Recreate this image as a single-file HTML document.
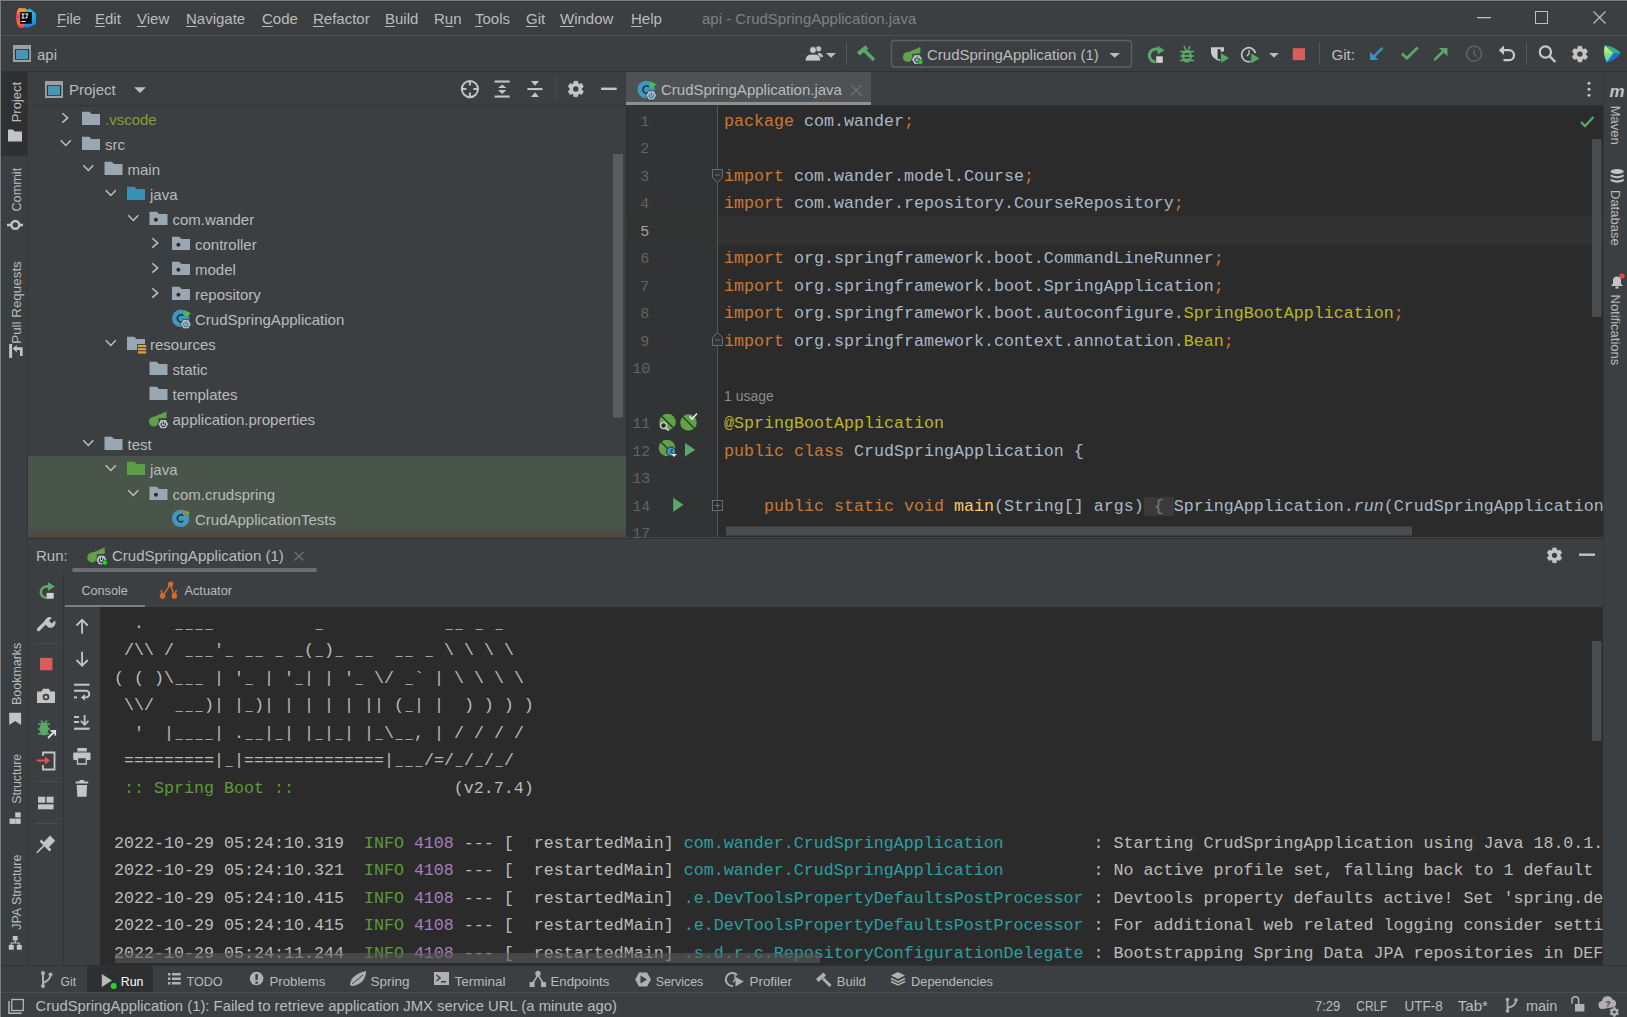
<!DOCTYPE html><html><head><meta charset="utf-8"><style>
html,body{margin:0;padding:0;width:1627px;height:1017px;overflow:hidden;background:#3c3f41}
.t{position:absolute;white-space:pre;font-family:"Liberation Sans",sans-serif;line-height:20px}
.m{position:absolute;white-space:pre;font-family:"Liberation Mono",monospace;line-height:27.5px;color:#a9b7c6}
.r{position:absolute}
svg{position:absolute;overflow:visible}
.us{display:inline-block;width:10px;transform:scaleX(0.72)}
.u{text-decoration:underline;text-underline-offset:2px;text-decoration-thickness:1px}
</style></head><body>

<div class="r" style="left:0px;top:0px;width:1627px;height:1px;background:#7a7e81;"></div>
<div class="r" style="left:1px;top:1px;width:1626px;height:1px;background:#36393b;"></div>
<div class="r" style="left:0px;top:0px;width:1px;height:1017px;background:#7a7e81;"></div>
<div class="r" style="left:1px;top:35px;width:1626px;height:1px;background:#4e5153;"></div>
<div class="r" style="left:1px;top:71px;width:1626px;height:1px;background:#2f3133;"></div>
<div class="t" style="left:57px;top:9.00px;font-size:15px;color:#bbbbbb;"><span class="u">F</span>ile</div>
<div class="t" style="left:95px;top:9.00px;font-size:15px;color:#bbbbbb;"><span class="u">E</span>dit</div>
<div class="t" style="left:137px;top:9.00px;font-size:15px;color:#bbbbbb;"><span class="u">V</span>iew</div>
<div class="t" style="left:186px;top:9.00px;font-size:15px;color:#bbbbbb;"><span class="u">N</span>avigate</div>
<div class="t" style="left:262px;top:9.00px;font-size:15px;color:#bbbbbb;"><span class="u">C</span>ode</div>
<div class="t" style="left:313px;top:9.00px;font-size:15px;color:#bbbbbb;"><span class="u">R</span>efactor</div>
<div class="t" style="left:385px;top:9.00px;font-size:15px;color:#bbbbbb;"><span class="u">B</span>uild</div>
<div class="t" style="left:434px;top:9.00px;font-size:15px;color:#bbbbbb;">R<span class="u">u</span>n</div>
<div class="t" style="left:475px;top:9.00px;font-size:15px;color:#bbbbbb;"><span class="u">T</span>ools</div>
<div class="t" style="left:526px;top:9.00px;font-size:15px;color:#bbbbbb;"><span class="u">G</span>it</div>
<div class="t" style="left:560px;top:9.00px;font-size:15px;color:#bbbbbb;"><span class="u">W</span>indow</div>
<div class="t" style="left:631px;top:9.00px;font-size:15px;color:#bbbbbb;"><span class="u">H</span>elp</div>
<div class="t" style="left:702px;top:9.00px;font-size:15px;color:#7f8183;">api - CrudSpringApplication.java</div>
<svg style="left:1477px;top:17px" width="16" height="2"><rect x="0" y="0" width="14" height="1.3" fill="#bdbdbd"/></svg>
<svg style="left:1535px;top:11px" width="14" height="14"><rect x="0.5" y="0.5" width="12" height="12" fill="none" stroke="#bdbdbd" stroke-width="1"/></svg>
<svg style="left:1593px;top:11px" width="14" height="14"><path d="M0.5 0.5L12.5 12.5M12.5 0.5L0.5 12.5" stroke="#bdbdbd" stroke-width="1.1"/></svg>
<div class="t" style="left:37px;top:44.60px;font-size:15px;color:#bbbbbb;">api</div>
<div class="r" style="left:1px;top:72px;width:27px;height:84px;background:#2e3032;"></div>
<div class="r" style="left:27px;top:72px;width:1px;height:893px;background:#323435;"></div>
<div class="r" style="left:1603px;top:72px;width:1px;height:893px;background:#323435;"></div>
<div class="r" style="left:28px;top:105px;width:598px;height:1px;background:#323435;"></div>
<div class="t" style="left:69px;top:79.80px;font-size:15px;color:#bbbbbb;">Project</div>
<div class="r" style="left:28px;top:456px;width:598px;height:75px;background:#49544a;"></div>
<div class="r" style="left:28px;top:527px;width:598px;height:10px;background:linear-gradient(#49544a,#4e4c42 40%,#51493f);"></div>
<div class="t" style="left:105.0px;top:109.50px;font-size:15px;color:#8c9a38;">.vscode</div>
<div class="t" style="left:105.0px;top:134.50px;font-size:15px;color:#bbbbbb;">src</div>
<div class="t" style="left:127.5px;top:159.50px;font-size:15px;color:#bbbbbb;">main</div>
<div class="t" style="left:150.0px;top:184.50px;font-size:15px;color:#bbbbbb;">java</div>
<div class="t" style="left:172.5px;top:209.50px;font-size:15px;color:#bbbbbb;">com.wander</div>
<div class="t" style="left:195.0px;top:234.50px;font-size:15px;color:#bbbbbb;">controller</div>
<div class="t" style="left:195.0px;top:259.50px;font-size:15px;color:#bbbbbb;">model</div>
<div class="t" style="left:195.0px;top:284.50px;font-size:15px;color:#bbbbbb;">repository</div>
<div class="t" style="left:195.0px;top:309.50px;font-size:15px;color:#bbbbbb;">CrudSpringApplication</div>
<div class="t" style="left:150.0px;top:334.50px;font-size:15px;color:#bbbbbb;">resources</div>
<div class="t" style="left:172.5px;top:359.50px;font-size:15px;color:#bbbbbb;">static</div>
<div class="t" style="left:172.5px;top:384.50px;font-size:15px;color:#bbbbbb;">templates</div>
<div class="t" style="left:172.5px;top:409.50px;font-size:15px;color:#bbbbbb;">application.properties</div>
<div class="t" style="left:127.5px;top:434.50px;font-size:15px;color:#bbbbbb;">test</div>
<div class="t" style="left:150.0px;top:459.50px;font-size:15px;color:#bbbbbb;">java</div>
<div class="t" style="left:172.5px;top:484.50px;font-size:15px;color:#bbbbbb;">com.crudspring</div>
<div class="t" style="left:195.0px;top:509.50px;font-size:15px;color:#bbbbbb;">CrudApplicationTests</div>
<div class="r" style="left:28px;top:537px;width:1575px;height:1px;background:#434547;"></div>
<div class="r" style="left:28px;top:538px;width:1575px;height:1px;background:#2e3032;"></div>
<div class="r" style="left:626px;top:72px;width:977px;height:33px;background:#3c3f41;"></div>
<div class="r" style="left:626px;top:72px;width:245px;height:30px;background:#4e5254;"></div>
<div class="r" style="left:626px;top:102px;width:245px;height:3px;background:#8d9092;"></div>
<div class="r" style="left:626px;top:105px;width:977px;height:1px;background:#323232;"></div>
<div class="t" style="left:661px;top:79.80px;font-size:15px;color:#bbbbbb;">CrudSpringApplication.java</div>
<div class="r" style="left:626px;top:106px;width:91px;height:431px;background:#313335;"></div>
<div class="r" style="left:626px;top:106px;width:2px;height:431px;background:#2f3133;"></div>
<div class="r" style="left:717px;top:106px;width:1px;height:431px;background:#555555;"></div>
<div class="r" style="left:718px;top:106px;width:885px;height:431px;background:#2b2b2b;"></div>
<div class="r" style="left:626px;top:216px;width:91px;height:27.5px;background:#323434;"></div>
<div class="r" style="left:718px;top:216px;width:885px;height:27.5px;background:#323232;"></div>
<div class="m" style="left:640.3px;top:108.80px;font-size:15px;color:#606366">1</div>
<div class="m" style="left:724px;top:107.61px;font-size:16.67px"><span style="color:#cc7832">package</span> com.wander<span style="color:#cc7832">;</span></div>
<div class="m" style="left:640.3px;top:136.30px;font-size:15px;color:#606366">2</div>
<div class="m" style="left:640.3px;top:163.80px;font-size:15px;color:#606366">3</div>
<div class="m" style="left:724px;top:162.61px;font-size:16.67px"><span style="color:#cc7832">import</span> com.wander.model.Course<span style="color:#cc7832">;</span></div>
<div class="m" style="left:640.3px;top:191.30px;font-size:15px;color:#606366">4</div>
<div class="m" style="left:724px;top:190.11px;font-size:16.67px"><span style="color:#cc7832">import</span> com.wander.repository.CourseRepository<span style="color:#cc7832">;</span></div>
<div class="m" style="left:640.3px;top:218.80px;font-size:15px;color:#a4a3a3">5</div>
<div class="m" style="left:640.3px;top:246.30px;font-size:15px;color:#606366">6</div>
<div class="m" style="left:724px;top:245.11px;font-size:16.67px"><span style="color:#cc7832">import</span> org.springframework.boot.CommandLineRunner<span style="color:#cc7832">;</span></div>
<div class="m" style="left:640.3px;top:273.80px;font-size:15px;color:#606366">7</div>
<div class="m" style="left:724px;top:272.61px;font-size:16.67px"><span style="color:#cc7832">import</span> org.springframework.boot.SpringApplication<span style="color:#cc7832">;</span></div>
<div class="m" style="left:640.3px;top:301.30px;font-size:15px;color:#606366">8</div>
<div class="m" style="left:724px;top:300.11px;font-size:16.67px"><span style="color:#cc7832">import</span> org.springframework.boot.autoconfigure.<span style="color:#bbb529">SpringBootApplication</span><span style="color:#cc7832">;</span></div>
<div class="m" style="left:640.3px;top:328.80px;font-size:15px;color:#606366">9</div>
<div class="m" style="left:724px;top:327.61px;font-size:16.67px"><span style="color:#cc7832">import</span> org.springframework.context.annotation.<span style="color:#bbb529">Bean</span><span style="color:#cc7832">;</span></div>
<div class="m" style="left:632.3px;top:356.30px;font-size:15px;color:#606366">10</div>
<div class="t" style="left:724px;top:385.95px;font-size:14px;color:#8c8c8c;">1 usage</div>
<div class="m" style="left:632.3px;top:411.30px;font-size:15px;color:#606366">11</div>
<div class="m" style="left:724px;top:410.11px;font-size:16.67px"><span style="color:#bbb529">@SpringBootApplication</span></div>
<div class="m" style="left:632.3px;top:438.80px;font-size:15px;color:#606366">12</div>
<div class="m" style="left:724px;top:437.61px;font-size:16.67px"><span style="color:#cc7832">public class</span> CrudSpringApplication {</div>
<div class="m" style="left:632.3px;top:466.30px;font-size:15px;color:#606366">13</div>
<div class="m" style="left:632.3px;top:493.80px;font-size:15px;color:#606366">14</div>
<div class="m" style="left:724px;top:492.61px;font-size:16.67px">    <span style="color:#cc7832">public static void</span> <span style="color:#ffc66d">main</span>(String[] args)<span style="background:#3a3a3a;color:#7a7a7a"> { </span>SpringApplication.<i>run</i>(CrudSpringApplication</div>
<div class="m" style="left:632.3px;top:521.30px;font-size:15px;color:#606366">17</div>
<div class="t" style="left:36px;top:546.00px;font-size:15px;color:#bbbbbb;">Run:</div>
<div class="t" style="left:112px;top:546.00px;font-size:15px;color:#bbbbbb;">CrudSpringApplication (1)</div>
<div class="r" style="left:72px;top:568px;width:245px;height:4px;border-radius:2px;background:#6b6e70"></div>
<div class="r" style="left:63px;top:572px;width:1px;height:393px;background:#323435;"></div>
<div class="t" style="left:81.5px;top:580.63px;font-size:12.6px;color:#bbbbbb;">Console</div>
<div class="t" style="left:184.4px;top:580.56px;font-size:12.8px;color:#bbbbbb;">Actuator</div>
<div class="r" style="left:65px;top:605px;width:80px;height:2px;background:#7d8082;"></div>
<div class="r" style="left:100px;top:607px;width:1503px;height:358px;background:#2b2b2b;"></div>
<div class="r" style="left:64px;top:607px;width:36px;height:358px;background:#3c3f41;"></div>
<div class="m" style="left:114px;top:609.81px;font-size:16.67px;color:#bbbbbb">  .   <span class="us">_</span><span class="us">_</span><span class="us">_</span><span class="us">_</span>          <span class="us">_</span>            <span class="us">_</span><span class="us">_</span> <span class="us">_</span> <span class="us">_</span></div>
<div class="m" style="left:114px;top:637.31px;font-size:16.67px;color:#bbbbbb"> /\\ / <span class="us">_</span><span class="us">_</span><span class="us">_</span>'<span class="us">_</span> <span class="us">_</span><span class="us">_</span> <span class="us">_</span> <span class="us">_</span>(<span class="us">_</span>)<span class="us">_</span> <span class="us">_</span><span class="us">_</span>  <span class="us">_</span><span class="us">_</span> <span class="us">_</span> \ \ \ \</div>
<div class="m" style="left:114px;top:664.81px;font-size:16.67px;color:#bbbbbb">( ( )\<span class="us">_</span><span class="us">_</span><span class="us">_</span> | '<span class="us">_</span> | '<span class="us">_</span>| | '<span class="us">_</span> \/ <span class="us">_</span>` | \ \ \ \</div>
<div class="m" style="left:114px;top:692.31px;font-size:16.67px;color:#bbbbbb"> \\/  <span class="us">_</span><span class="us">_</span><span class="us">_</span>)| |<span class="us">_</span>)| | | | | || (<span class="us">_</span>| |  ) ) ) )</div>
<div class="m" style="left:114px;top:719.81px;font-size:16.67px;color:#bbbbbb">  '  |<span class="us">_</span><span class="us">_</span><span class="us">_</span><span class="us">_</span>| .<span class="us">_</span><span class="us">_</span>|<span class="us">_</span>| |<span class="us">_</span>|<span class="us">_</span>| |<span class="us">_</span>\<span class="us">_</span><span class="us">_</span>, | / / / /</div>
<div class="m" style="left:114px;top:747.31px;font-size:16.67px;color:#bbbbbb"> =========|<span class="us">_</span>|==============|<span class="us">_</span><span class="us">_</span><span class="us">_</span>/=/<span class="us">_</span>/<span class="us">_</span>/<span class="us">_</span>/</div>
<div class="m" style="left:114px;top:774.81px;font-size:16.67px;color:#bbbbbb"><span style="color:#5e9a3a"> :: Spring Boot ::</span>                (v2.7.4)</div>
<div class="m" style="left:114px;top:829.81px;font-size:16.67px;color:#bbbbbb">2022-10-29 05:24:10.319  <span style="color:#5e9a3a">INFO</span> <span style="color:#a57fbd">4108</span> --- [  restartedMain] <span style="color:#2aa0a0">com.wander.CrudSpringApplication        </span> : Starting CrudSpringApplication using Java 18.0.1.</div>
<div class="m" style="left:114px;top:857.31px;font-size:16.67px;color:#bbbbbb">2022-10-29 05:24:10.321  <span style="color:#5e9a3a">INFO</span> <span style="color:#a57fbd">4108</span> --- [  restartedMain] <span style="color:#2aa0a0">com.wander.CrudSpringApplication        </span> : No active profile set, falling back to 1 default</div>
<div class="m" style="left:114px;top:884.81px;font-size:16.67px;color:#bbbbbb">2022-10-29 05:24:10.415  <span style="color:#5e9a3a">INFO</span> <span style="color:#a57fbd">4108</span> --- [  restartedMain] <span style="color:#2aa0a0">.e.DevToolsPropertyDefaultsPostProcessor</span> : Devtools property defaults active! Set 'spring.de</div>
<div class="m" style="left:114px;top:912.31px;font-size:16.67px;color:#bbbbbb">2022-10-29 05:24:10.415  <span style="color:#5e9a3a">INFO</span> <span style="color:#a57fbd">4108</span> --- [  restartedMain] <span style="color:#2aa0a0">.e.DevToolsPropertyDefaultsPostProcessor</span> : For additional web related logging consider setti</div>
<div class="m" style="left:114px;top:939.81px;font-size:16.67px;color:#bbbbbb">2022-10-29 05:24:11.244  <span style="color:#5e9a3a">INFO</span> <span style="color:#a57fbd">4108</span> --- [  restartedMain] <span style="color:#2aa0a0">.s.d.r.c.RepositoryConfigurationDelegate</span> : Bootstrapping Spring Data JPA repositories in DEF</div>
<div class="r" style="left:1603px;top:607px;width:24px;height:358px;background:#3c3f41;"></div>
<div class="r" style="left:1px;top:965px;width:1626px;height:1px;background:#2f3133;"></div>
<div class="r" style="left:87px;top:966px;width:66px;height:26px;background:#2d2f31;"></div>
<div class="r" style="left:1px;top:992px;width:1626px;height:1px;background:#4a4d4f;"></div>
<div class="t" style="left:927px;top:44.50px;font-size:15px;color:#bbbbbb;">CrudSpringApplication (1)</div>
<svg style="left:0;top:0" width="1627" height="1017" viewBox="0 0 1627 1017"><text x="60.6" y="986" font-family="Liberation Sans" font-size="13" fill="#bbbbbb" textLength="15.4" lengthAdjust="spacingAndGlyphs">Git</text><text x="120.8" y="986" font-family="Liberation Sans" font-size="13" fill="#ffffff" textLength="22.6" lengthAdjust="spacingAndGlyphs">Run</text><text x="186.5" y="986" font-family="Liberation Sans" font-size="13" fill="#bbbbbb" textLength="36" lengthAdjust="spacingAndGlyphs">TODO</text><text x="269.5" y="986" font-family="Liberation Sans" font-size="13" fill="#bbbbbb" textLength="55.8" lengthAdjust="spacingAndGlyphs">Problems</text><text x="370.5" y="986" font-family="Liberation Sans" font-size="13" fill="#bbbbbb" textLength="39" lengthAdjust="spacingAndGlyphs">Spring</text><text x="454.5" y="986" font-family="Liberation Sans" font-size="13" fill="#bbbbbb" textLength="51" lengthAdjust="spacingAndGlyphs">Terminal</text><text x="550.5" y="986" font-family="Liberation Sans" font-size="13" fill="#bbbbbb" textLength="58.8" lengthAdjust="spacingAndGlyphs">Endpoints</text><text x="655.7" y="986" font-family="Liberation Sans" font-size="13" fill="#bbbbbb" textLength="47.6" lengthAdjust="spacingAndGlyphs">Services</text><text x="749.5" y="986" font-family="Liberation Sans" font-size="13" fill="#bbbbbb" textLength="42.5" lengthAdjust="spacingAndGlyphs">Profiler</text><text x="836.8" y="986" font-family="Liberation Sans" font-size="13" fill="#bbbbbb" textLength="29" lengthAdjust="spacingAndGlyphs">Build</text><text x="911" y="986" font-family="Liberation Sans" font-size="13" fill="#bbbbbb" textLength="82" lengthAdjust="spacingAndGlyphs">Dependencies</text><text x="35.5" y="1011" font-family="Liberation Sans" font-size="15" fill="#bbbbbb" textLength="581.5" lengthAdjust="spacingAndGlyphs">CrudSpringApplication (1): Failed to retrieve application JMX service URL (a minute ago)</text><text x="1315" y="1010.5" font-family="Liberation Sans" font-size="15" fill="#bbbbbb" textLength="25.2" lengthAdjust="spacingAndGlyphs">7:29</text><text x="1356.3" y="1010.5" font-family="Liberation Sans" font-size="15" fill="#bbbbbb" textLength="31.1" lengthAdjust="spacingAndGlyphs">CRLF</text><text x="1404.5" y="1010.5" font-family="Liberation Sans" font-size="15" fill="#bbbbbb" textLength="38.2" lengthAdjust="spacingAndGlyphs">UTF-8</text><text x="1457.8" y="1010.5" font-family="Liberation Sans" font-size="15" fill="#bbbbbb" textLength="30.2" lengthAdjust="spacingAndGlyphs">Tab*</text><text x="1526" y="1010.5" font-family="Liberation Sans" font-size="15" fill="#bbbbbb" textLength="31.3" lengthAdjust="spacingAndGlyphs">main</text><defs><linearGradient id="ijl" x1="0" y1="0" x2="0" y2="1"><stop offset="0" stop-color="#f5a623"/><stop offset="0.45" stop-color="#e8407a"/><stop offset="0.7" stop-color="#f07a2a"/><stop offset="1" stop-color="#e83a6a"/></linearGradient><linearGradient id="ijr" x1="0" y1="0" x2="0" y2="1"><stop offset="0" stop-color="#22c3e6"/><stop offset="1" stop-color="#1a7ee6"/></linearGradient><linearGradient id="tbx" x1="0" y1="0" x2="1" y2="1"><stop offset="0" stop-color="#f2e84a"/><stop offset="0.45" stop-color="#3fd07a"/><stop offset="1" stop-color="#1f6fe0"/></linearGradient></defs><path d="M19 8 L26 8.5 L28 12 L27 25 L24 27.8 L19.5 28 L17 24 L16 17 L17 11 Z" fill="url(#ijl)"/><path d="M26.5 10 L30 8.5 L35.8 13.5 L36 24 L28 27.8 L24 27 Z" fill="url(#ijr)"/><rect x="20.2" y="12.1" width="11.6" height="11.6" fill="#000"/><path d="M21.4 13.6 H24.6 V14.6 H23.5 V17.4 H24.6 V18.4 H21.4 V17.4 H22.5 V14.6 H21.4 Z" fill="#fff"/><path d="M25.2 13.6 H28.4 V14.6 H27.5 V17 Q27.5 18.5 25.9 18.5 H25.1 V17.4 H25.9 Q26.5 17.4 26.5 16.8 V14.6 H25.2 Z" fill="#fff"/><rect x="21.2" y="21" width="4.5" height="1" fill="#fff"/><rect x="13" y="45" width="18" height="17" fill="#9ca0a4"/><rect x="14.9" y="49.1" width="14.3" height="10.7" fill="#1e3644"/><rect x="16" y="49.9" width="12" height="9.1" fill="#4697b6"/><circle cx="818.6" cy="48.8" r="2.6" fill="#bdbdbd"/><path d="M816 58 Q817 52.5 820 53 Q822.5 53.5 823 57 Z" fill="#bdbdbd"/><circle cx="813" cy="50" r="3.4" fill="#c8c8c8" stroke="#3c3f41" stroke-width="0.8"/><path d="M805.2 61 Q805.5 55 810 54.2 L816 54.2 Q820.5 55 820.6 61 Z" fill="#c8c8c8" stroke="#3c3f41" stroke-width="0.8"/><path d="M826 53 L836 53 L831 57.8 Z" fill="#bdbdbd"/><rect x="846" y="42" width="1" height="23" fill="#55585a"/><path d="M864.5 50.5 L874 60" stroke="#59a869" stroke-width="3.2" stroke-linecap="butt"/><path d="M856.8 52.2 L865.5 45.3 L868.4 48.6 L859.8 55.6 Z" fill="#59a869"/><rect x="891.5" y="40.5" width="240" height="26.5" rx="3" fill="none" stroke="#5e6163" stroke-width="1.3"/><circle cx="907.80" cy="57.00" r="4.90" fill="#62a14a"/><path d="M906.20 53.00 L920.40 47 L920.40 53.30 L912.20 54.00 L909.20 59.00 Z" fill="#62a14a"/><polygon points="922.70,59.50 919.90,64.35 914.30,64.35 911.50,59.50 914.30,54.65 919.90,54.65" fill="#bcc5cd" stroke="#2f3133" stroke-width="0.8"/><path d="M915.42 58.16 A2.24 2.24 0 1 0 918.78 58.16" fill="none" stroke="#1e2a33" stroke-width="1.05"/><path d="M917.1 56.59 V59.72" stroke="#1e2a33" stroke-width="1.05"/><circle cx="920.4000000000001" cy="62.1" r="2.6" fill="#22d426" stroke="#1d3a1f" stroke-width="0.6"/><path d="M1109.5 53 L1120 53 L1114.75 57.8 Z" fill="#bdbdbd"/><path d="M1160 50.5 A6.5 6.5 0 1 0 1155.5 62" fill="none" stroke="#59a869" stroke-width="3"/><path d="M1157.5 45.8 L1164.5 50.2 L1157.5 54.6 Z" fill="#59a869"/><rect x="1156.2" y="56.3" width="6.6" height="6.5" fill="#cfd0d0"/><ellipse cx="1186.9" cy="56" rx="5" ry="6.6" fill="#59a869"/><path d="M1180 51.5 H1194 M1180 56 H1194 M1180 60.5 H1194 M1184 46 L1185.5 49.5 M1190 46 L1188.5 49.5" stroke="#59a869" stroke-width="1.6"/><rect x="1184.5" y="53.3" width="5" height="1.5" fill="#2b3a2d"/><rect x="1184.5" y="57" width="5" height="1.5" fill="#2b3a2d"/><path d="M1211 47.2 H1224 V51.4 H1220.5 V61 Q1212.5 59.5 1211 53 Z" fill="#c8cacc"/><rect x="1217.6" y="49.2" width="2.9" height="9.8" fill="#2f3133"/><path d="M1220.6 52.6 L1229.9 58.1 L1220.6 63.4 Z" fill="#59a869" stroke="#2a2c2e" stroke-width="0.6"/><path d="M1252.5 60.5 A7 7 0 1 1 1255.4 53" fill="none" stroke="#c8c8c8" stroke-width="1.6"/><path d="M1249 50 L1249 53.8 L1247 56" stroke="#c8c8c8" stroke-width="1.3" fill="none"/><path d="M1250.8 52.8 L1260.1 58.4 L1250.8 63.9 Z" fill="#59a869" stroke="#2a2c2e" stroke-width="0.5"/><path d="M1269.2 53 L1278.8 53 L1274 57.8 Z" fill="#bdbdbd"/><rect x="1292.8" y="48.2" width="12.2" height="11.9" fill="#db5c5c"/><rect x="1319" y="42" width="1" height="23" fill="#55585a"/><text x="1331.5" y="59.8" font-family="Liberation Sans" font-size="15" fill="#bbbbbb">Git:</text><path d="M1382.5 47.9 L1372.5 57.9" stroke="#3592c4" stroke-width="2.6"/><path d="M1370 51.7 L1370 60.1 L1378.4 60.1 Z" fill="#3592c4"/><path d="M1402 53.5 L1406.7 58.2 L1417.8 47.5" fill="none" stroke="#59a869" stroke-width="2.8"/><path d="M1434.3 60.1 L1444 50.5" stroke="#59a869" stroke-width="2.6"/><path d="M1439 47.9 L1447.5 47.9 L1447.5 56.3 Z" fill="#59a869"/><circle cx="1474" cy="53.7" r="7.5" fill="none" stroke="#5f6264" stroke-width="1.6"/><path d="M1474 49.5 L1474 54 L1476.8 56.8" fill="none" stroke="#5f6264" stroke-width="1.4"/><path d="M1503.5 50.2 L1509 50.2 A5 5 0 0 1 1509 60.2 L1503.5 60.2" fill="none" stroke="#c8c8c8" stroke-width="2.2"/><path d="M1498.8 50.2 L1504 45.5 L1504 54.9 Z" fill="#c8c8c8"/><rect x="1526" y="42" width="1" height="23" fill="#55585a"/><circle cx="1545.4" cy="52" r="5.6" fill="none" stroke="#c8c8c8" stroke-width="2.2"/><path d="M1549.5 56.2 L1555.4 62" stroke="#c8c8c8" stroke-width="2.4"/><polygon points="1587.55,56.44 1585.75,59.56 1583.46,58.83 1582.21,59.55 1581.70,61.89 1578.10,61.89 1577.59,59.55 1576.34,58.83 1574.05,59.56 1572.25,56.44 1574.02,54.82 1574.02,53.38 1572.25,51.76 1574.05,48.64 1576.34,49.37 1577.59,48.65 1578.10,46.31 1581.70,46.31 1582.21,48.65 1583.46,49.37 1585.75,48.64 1587.55,51.76 1585.78,53.38 1585.78,54.82" fill="#c4c4c4" stroke="#c4c4c4" stroke-width="0.6" stroke-linejoin="round"/><circle cx="1579.9" cy="54.1" r="2.72" fill="#3c3f41"/><linearGradient id="tbl" x1="0" y1="0" x2="0" y2="1"><stop offset="0" stop-color="#eef25a"/><stop offset="0.55" stop-color="#7ee08a"/><stop offset="1" stop-color="#35c8e8"/></linearGradient><path d="M1604.9 45.2 Q1602.3 53 1606.8 62.6 L1613.7 53 Z" fill="url(#tbl)"/><path d="M1604.9 45.2 Q1614.5 46.3 1620.9 53 L1613.7 53 Z" fill="#27b48e"/><path d="M1613.7 53 L1620.9 53 Q1615.5 60.3 1606.8 62.6 Z" fill="#1f72d6"/><path d="M62.3 113.2 L67.7 117.9 L62.3 122.60000000000001" fill="none" stroke="#bfbfbf" stroke-width="1.5"/><path d="M82.0 111.7 H89.3 L91.5 114.0 H100.0 V124.9 H82.0 Z" fill="#9aa7b0"/><path d="M60.8 140.29999999999998 L65.8 145.49999999999997 L70.8 140.29999999999998" fill="none" stroke="#bfbfbf" stroke-width="1.5"/><path d="M82.0 136.7 H89.3 L91.5 139.0 H100.0 V149.89999999999998 H82.0 Z" fill="#9aa7b0"/><path d="M83.3 165.29999999999998 L88.3 170.49999999999997 L93.3 165.29999999999998" fill="none" stroke="#bfbfbf" stroke-width="1.5"/><path d="M104.5 161.7 H111.8 L114.0 164.0 H122.5 V174.89999999999998 H104.5 Z" fill="#9aa7b0"/><path d="M105.8 190.29999999999998 L110.8 195.49999999999997 L115.8 190.29999999999998" fill="none" stroke="#bfbfbf" stroke-width="1.5"/><path d="M127.0 186.7 H134.3 L136.5 189.0 H145.0 V199.89999999999998 H127.0 Z" fill="#3592b5"/><path d="M128.3 215.29999999999998 L133.3 220.49999999999997 L138.3 215.29999999999998" fill="none" stroke="#bfbfbf" stroke-width="1.5"/><path d="M149.5 211.7 H156.8 L159.0 214.0 H167.5 V224.89999999999998 H149.5 Z" fill="#9aa7b0"/><circle cx="155.9" cy="219.79999999999998" r="2" fill="#2b2d2f"/><path d="M152.3 238.2 L157.7 242.89999999999998 L152.3 247.59999999999997" fill="none" stroke="#bfbfbf" stroke-width="1.5"/><path d="M172.0 236.7 H179.3 L181.5 239.0 H190.0 V249.89999999999998 H172.0 Z" fill="#9aa7b0"/><circle cx="178.4" cy="244.79999999999998" r="2" fill="#2b2d2f"/><path d="M152.3 263.2 L157.7 267.9 L152.3 272.59999999999997" fill="none" stroke="#bfbfbf" stroke-width="1.5"/><path d="M172.0 261.7 H179.3 L181.5 264.0 H190.0 V274.9 H172.0 Z" fill="#9aa7b0"/><circle cx="178.4" cy="269.8" r="2" fill="#2b2d2f"/><path d="M152.3 288.2 L157.7 292.9 L152.3 297.59999999999997" fill="none" stroke="#bfbfbf" stroke-width="1.5"/><path d="M172.0 286.7 H179.3 L181.5 289.0 H190.0 V299.9 H172.0 Z" fill="#9aa7b0"/><circle cx="178.4" cy="294.8" r="2" fill="#2b2d2f"/><circle cx="180.70000000000002" cy="318.3" r="8.7" fill="#4297bb"/><path d="M183.3 315.7 A3.5 3.5 0 1 0 183.3 320.90000000000003" fill="none" stroke="#173848" stroke-width="1.5"/><path d="M184.70000000000002 310.0 L191.1 313.4 L184.70000000000002 316.9 Z" fill="#4fc23d"/><polygon points="191.20,324.10 188.50,328.78 183.10,328.78 180.40,324.10 183.10,319.42 188.50,319.42" fill="#a9bccb" stroke="#3c3f41" stroke-width="0.8"/><path d="M184.18 322.80 A2.16 2.16 0 1 0 187.42 322.80" fill="none" stroke="#3a6a88" stroke-width="1.05"/><path d="M185.8 321.29 V324.32" stroke="#3a6a88" stroke-width="1.05"/><path d="M105.8 340.29999999999995 L110.8 345.5 L115.8 340.29999999999995" fill="none" stroke="#bfbfbf" stroke-width="1.5"/><path d="M127.0 336.7 H134.3 L136.5 339.0 H145.0 V349.9 H127.0 Z" fill="#9aa7b0"/><rect x="137.0" y="344.0" width="9.2" height="10.2" fill="#3c3f41"/><rect x="137.8" y="344.9" width="8.4" height="2.2" fill="#d9a343"/><rect x="137.8" y="348.1" width="8.4" height="2.2" fill="#d9a343"/><rect x="137.8" y="351.3" width="8.4" height="2.2" fill="#d9a343"/><path d="M149.5 361.7 H156.8 L159.0 364.0 H167.5 V374.9 H149.5 Z" fill="#9aa7b0"/><path d="M149.5 386.7 H156.8 L159.0 389.0 H167.5 V399.9 H149.5 Z" fill="#9aa7b0"/><circle cx="153.90" cy="421.60" r="4.90" fill="#62a14a"/><path d="M152.30 417.60 L166.50 411.59999999999997 L166.50 417.90 L158.30 418.60 L155.30 423.60 Z" fill="#62a14a"/><polygon points="168.60,424.10 165.95,428.69 160.65,428.69 158.00,424.10 160.65,419.51 165.95,419.51" fill="#bcc5cd" stroke="#2f3133" stroke-width="0.8"/><path d="M161.71 422.83 A2.12 2.12 0 1 0 164.89 422.83" fill="none" stroke="#1e2a33" stroke-width="1.05"/><path d="M163.3 421.34 V424.31" stroke="#1e2a33" stroke-width="1.05"/><path d="M83.3 440.29999999999995 L88.3 445.5 L93.3 440.29999999999995" fill="none" stroke="#bfbfbf" stroke-width="1.5"/><path d="M104.5 436.7 H111.8 L114.0 439.0 H122.5 V449.9 H104.5 Z" fill="#9aa7b0"/><path d="M105.8 465.29999999999995 L110.8 470.5 L115.8 465.29999999999995" fill="none" stroke="#bfbfbf" stroke-width="1.5"/><path d="M127.0 461.7 H134.3 L136.5 464.0 H145.0 V474.9 H127.0 Z" fill="#5a9e45"/><path d="M128.3 490.29999999999995 L133.3 495.5 L138.3 490.29999999999995" fill="none" stroke="#bfbfbf" stroke-width="1.5"/><path d="M149.5 486.7 H156.8 L159.0 489.0 H167.5 V499.9 H149.5 Z" fill="#9aa7b0"/><circle cx="155.9" cy="494.8" r="2" fill="#2b2d2f"/><circle cx="180.70000000000002" cy="518.3" r="8.7" fill="#4297bb"/><path d="M183.3 515.6999999999999 A3.5 3.5 0 1 0 183.3 520.9" fill="none" stroke="#173848" stroke-width="1.5"/><path d="M182.9 509.7 L187.5 511.7 L183.9 515.5 Z" fill="#e0633a"/><path d="M186.4 510.5 L190.1 513.1 L186.4 515.7 Z" fill="#5ab84a"/><rect x="613" y="154" width="10" height="263.5" fill="#595b5d"/><circle cx="646.1999999999999" cy="89.5" r="8.7" fill="#4297bb"/><path d="M648.8 86.9 A3.5 3.5 0 1 0 648.8 92.1" fill="none" stroke="#173848" stroke-width="1.5"/><path d="M650.1999999999999 81.2 L656.6 84.60000000000001 L650.1999999999999 88.10000000000001 Z" fill="#4fc23d"/><polygon points="656.70,95.30 654.00,99.98 648.60,99.98 645.90,95.30 648.60,90.62 654.00,90.62" fill="#a9bccb" stroke="#3c3f41" stroke-width="0.8"/><path d="M649.68 94.00 A2.16 2.16 0 1 0 652.92 94.00" fill="none" stroke="#3a6a88" stroke-width="1.05"/><path d="M651.3 92.49 V95.52" stroke="#3a6a88" stroke-width="1.05"/><path d="M851 85 L861.5 95.5 M861.5 85 L851 95.5" stroke="#6e7072" stroke-width="1.3"/><path d="M712.5 169.5 H722.5 V177.5 L717.5 182.5 L712.5 177.5 Z" fill="#313335" stroke="#6a6d70" stroke-width="1"/><path d="M714.8 175 H720.2" stroke="#6a6d70" stroke-width="1"/><path d="M712.5 345.5 H722.5 V337.5 L717.5 332.5 L712.5 337.5 Z" fill="#313335" stroke="#6a6d70" stroke-width="1"/><path d="M714.8 340 H720.2" stroke="#6a6d70" stroke-width="1"/><rect x="712.5" y="500.5" width="10" height="10" fill="#2b2b2b" stroke="#6a6d70" stroke-width="1"/><path d="M714.5 505.5 H720.5 M717.5 502.5 V508.5" stroke="#6a6d70" stroke-width="1"/><circle cx="667.5" cy="422" r="8.3" fill="#62a14a"/><path d="M661.5 416 L673.5 428" stroke="#1f3a1a" stroke-width="1.3"/><circle cx="688.5" cy="422.5" r="8.3" fill="#62a14a"/><path d="M682.5 416.5 L694.5 428.5" stroke="#1f3a1a" stroke-width="1.3"/><circle cx="667" cy="448" r="8.3" fill="#62a14a"/><path d="M661 442 L673 454" stroke="#1f3a1a" stroke-width="1.3"/><circle cx="663.5" cy="425.5" r="3" fill="#2b2b2b" stroke="#c8c8c8" stroke-width="1.5"/><path d="M665.7 427.7 L668.8 430.6" stroke="#c8c8c8" stroke-width="1.6"/><circle cx="693" cy="417.5" r="5" fill="#2b2b2b" opacity="0.0"/><path d="M689.5 416.5 L692 419 L697 413.5" fill="none" stroke="#e8e8e8" stroke-width="1.6"/><circle cx="671" cy="451.5" r="4.5" fill="#3d93b8" stroke="#2b2b2b" stroke-width="1"/><path d="M673 449.5 A2 2 0 1 0 673 453.5" fill="none" stroke="#1b3a4a" stroke-width="1"/><path d="M671 454 L677 454 L674 457 Z" fill="#e0e0e0"/><path d="M685 442.9 L695.2 449.7 L685 456.5 Z" fill="#59a869"/><path d="M673.2 497.8 L683.4 504.8 L673.2 511.9 Z" fill="#59a869"/><path d="M1581 122 L1585 126 L1593.5 117" fill="none" stroke="#59a869" stroke-width="2.4"/><circle cx="1589" cy="83.2" r="1.5" fill="#c4c4c4"/><circle cx="1589" cy="89.2" r="1.5" fill="#c4c4c4"/><circle cx="1589" cy="95.2" r="1.5" fill="#c4c4c4"/><rect x="1592" y="139" width="9.5" height="178" fill="#4a4c4e"/><rect x="726" y="526.5" width="686" height="9" fill="#4a4c4e"/><circle cx="92.20" cy="557.50" r="4.90" fill="#62a14a"/><path d="M90.60 553.50 L104.80 547.5 L104.80 553.80 L96.60 554.50 L93.60 559.50 Z" fill="#62a14a"/><polygon points="107.10,560.00 104.30,564.85 98.70,564.85 95.90,560.00 98.70,555.15 104.30,555.15" fill="#bcc5cd" stroke="#2f3133" stroke-width="0.8"/><path d="M99.82 558.66 A2.24 2.24 0 1 0 103.18 558.66" fill="none" stroke="#1e2a33" stroke-width="1.05"/><path d="M101.5 557.09 V560.22" stroke="#1e2a33" stroke-width="1.05"/><circle cx="104.8" cy="562.6" r="2.6" fill="#22d426" stroke="#1d3a1f" stroke-width="0.6"/><path d="M294.5 552 L303.5 560.5 M303.5 552 L294.5 560.5" stroke="#6e7072" stroke-width="1.3"/><polygon points="1561.77,557.52 1560.06,560.48 1557.88,559.79 1556.70,560.48 1556.21,562.71 1552.79,562.71 1552.30,560.48 1551.12,559.79 1548.94,560.48 1547.23,557.52 1548.92,555.99 1548.92,554.61 1547.23,553.08 1548.94,550.12 1551.12,550.81 1552.30,550.12 1552.79,547.89 1556.21,547.89 1556.70,550.12 1557.88,550.81 1560.06,550.12 1561.77,553.08 1560.08,554.61 1560.08,555.99" fill="#c4c4c4" stroke="#c4c4c4" stroke-width="0.6" stroke-linejoin="round"/><circle cx="1554.5" cy="555.3" r="2.58" fill="#3c3f41"/><rect x="1579" y="553.5" width="16" height="2.4" fill="#c4c4c4"/><path d="M50 587.5 A5.8 5.8 0 1 0 46.5 598" fill="none" stroke="#59a869" stroke-width="2.6"/><path d="M47.9 582 L54.9 586.5 L47.9 591 Z" fill="#59a869"/><rect x="46.6" y="592.9" width="7.1" height="5.8" fill="#cfd0d0"/><path d="M38.5 629.5 L47 621" stroke="#c4c4c4" stroke-width="3.2" stroke-linecap="round"/><path d="M45 624 A5.2 5.2 0 0 1 52 617.5 L49 620.8 L51.8 623.5 L55 620.5 A5.2 5.2 0 0 1 48.5 627.5 Z" fill="#c4c4c4"/><rect x="33.8" y="643.3" width="24.5" height="1" fill="#4a4d4f"/><rect x="40" y="657.9" width="12.4" height="12.4" fill="#db5c5c"/><path d="M37 691.5 H41.5 L43 688.8 H49 L50.5 691.5 H55 V702.9 H37 Z" fill="#c4c4c4"/><circle cx="46" cy="697" r="3.3" fill="#3c3f41"/><circle cx="46" cy="697" r="1.6" fill="#c4c4c4"/><ellipse cx="44" cy="729" rx="4.5" ry="6.5" fill="#59a869"/><path d="M38 724 H50 M38 729 H50 M38 734 H49 M41 720.5 L43 723 M47 720.5 L45 723" stroke="#59a869" stroke-width="1.6"/><path d="M48 738 L54.5 731.5 M50.5 730.8 H55.2 V735.5" fill="none" stroke="#e0e0e0" stroke-width="1.8"/><path d="M43 756 V752.5 H54.5 V769.5 H43 V765" fill="none" stroke="#c4c4c4" stroke-width="1.8"/><path d="M37 760.5 H47" stroke="#e05555" stroke-width="2"/><path d="M45 756.5 L50 760.5 L45 764.5 Z" fill="#e05555"/><rect x="34.7" y="781" width="23.6" height="1" fill="#4a4d4f"/><rect x="38" y="796.7" width="7.2" height="6" fill="#c4c4c4"/><rect x="46.5" y="796.7" width="7.1" height="6" fill="#c4c4c4"/><rect x="38" y="804.3" width="15.6" height="5" fill="#c4c4c4"/><rect x="34.7" y="823" width="23.6" height="1" fill="#4a4d4f"/><path d="M36.8 852.8 L45 844.6" stroke="#c4c4c4" stroke-width="1.6"/><path d="M40.5 840.5 L50.5 850.5" stroke="#c4c4c4" stroke-width="2.6"/><path d="M43.5 842.5 L50 835.5 L55.2 840.7 L48.5 847.5 Z" fill="#c4c4c4"/><path d="M82.1 620 V633.8 M76.5 625.5 L82.1 619.8 L87.7 625.5" fill="none" stroke="#c4c4c4" stroke-width="1.8"/><path d="M82.1 651.7 V665.5 M76.5 660 L82.1 665.8 L87.7 660" fill="none" stroke="#c4c4c4" stroke-width="1.8"/><rect x="74.1" y="683.7" width="15.4" height="2" fill="#c4c4c4"/><path d="M74 690.8 H86 A3.3 3.3 0 0 1 86 697.4 H84" fill="none" stroke="#c4c4c4" stroke-width="1.9"/><path d="M80.8 697.4 L85 694.3 L85 700.5 Z" fill="#c4c4c4"/><rect x="74" y="696.4" width="3" height="2" fill="#c4c4c4"/><rect x="74" y="716" width="5" height="2" fill="#c4c4c4"/><rect x="74" y="721" width="5" height="2" fill="#c4c4c4"/><rect x="74" y="727.6" width="15.6" height="2.2" fill="#c4c4c4"/><path d="M84.6 715 V724.5 M80.8 720.8 L84.6 724.8 L88.4 720.8" fill="none" stroke="#c4c4c4" stroke-width="1.8"/><rect x="77.3" y="748" width="9.5" height="3.5" fill="#c4c4c4"/><rect x="73.2" y="752.5" width="17.3" height="7.5" rx="1" fill="#c4c4c4"/><path d="M77.5 757.5 H86.3 V764 H77.5 Z" fill="#3c3f41" stroke="#c4c4c4" stroke-width="1.3"/><rect x="75.6" y="781.5" width="12.6" height="2" fill="#c4c4c4"/><rect x="79.5" y="780" width="4.8" height="2" fill="#c4c4c4"/><path d="M76.7 785 H87.1 L86.5 796.7 H77.3 Z" fill="#c4c4c4"/><path d="M162.6 595.9 L170.6 584.2 L174.3 595.9 M162.6 595.9 L161 590 M174.3 595.9 L176.5 590" fill="none" stroke="#d9672e" stroke-width="1.5"/><circle cx="170.6" cy="584.2" r="2.6" fill="#d9672e"/><circle cx="162.6" cy="595.9" r="2.8" fill="#d9672e"/><circle cx="174.3" cy="595.9" r="2.8" fill="#d9672e"/><rect x="1592" y="641" width="9.5" height="100" fill="#4a4c4e"/><rect x="115" y="953" width="705" height="10" fill="#5a5a5a" opacity="0.6"/><text transform="translate(21.1,122.3) rotate(-90)" font-family="Liberation Sans" font-size="13" fill="#bbbbbb">Project</text><path d="M8 129.4 H13 L14.5 131.5 H22 V141.4 H8 Z" fill="#c4c4c4"/><text transform="translate(21.1,211.6) rotate(-90)" font-family="Liberation Sans" font-size="13" fill="#bbbbbb" textLength="43.8" lengthAdjust="spacingAndGlyphs">Commit</text><circle cx="15.3" cy="224.9" r="3.9" fill="none" stroke="#c4c4c4" stroke-width="2.5"/><path d="M7 224.9 H11.5 M19 224.9 H23" stroke="#c4c4c4" stroke-width="2.5"/><text transform="translate(21.1,343.8) rotate(-90)" font-family="Liberation Sans" font-size="13" fill="#bbbbbb" textLength="82.6" lengthAdjust="spacingAndGlyphs">Pull Requests</text><rect x="9.2" y="344" width="2.9" height="13.9" fill="#c4c4c4"/><path d="M12.7 348.5 L16.8 344.9 L16.8 352.3 Z" fill="#c4c4c4"/><path d="M16.5 348.6 H21.3 V356.1" fill="none" stroke="#c4c4c4" stroke-width="2.6"/><text transform="translate(21.1,705) rotate(-90)" font-family="Liberation Sans" font-size="13" fill="#bbbbbb" textLength="62.3" lengthAdjust="spacingAndGlyphs">Bookmarks</text><path d="M9.2 712.7 H21.1 V725 L15.15 721 L9.2 725 Z" fill="#c4c4c4"/><text transform="translate(21.1,803.7) rotate(-90)" font-family="Liberation Sans" font-size="13" fill="#bbbbbb" textLength="49.8" lengthAdjust="spacingAndGlyphs">Structure</text><rect x="15.2" y="812.4" width="5.5" height="5" fill="#c4c4c4"/><rect x="9.5" y="818.6" width="5.5" height="5.3" fill="#c4c4c4"/><rect x="15.2" y="818.6" width="5.5" height="5.3" fill="#c4c4c4"/><text transform="translate(21.1,929.7) rotate(-90)" font-family="Liberation Sans" font-size="13" fill="#bbbbbb" textLength="75" lengthAdjust="spacingAndGlyphs">JPA Structure</text><rect x="12.8" y="936" width="4.8" height="4.5" fill="#c4c4c4"/><rect x="8.8" y="945" width="5" height="4.7" fill="#c4c4c4"/><rect x="16.8" y="945" width="5" height="4.7" fill="#c4c4c4"/><path d="M15.2 940.5 V943 M11.3 945 V943 H19.3 V945" fill="none" stroke="#c4c4c4" stroke-width="1.2"/><text transform="translate(1611,105.7) rotate(90)" font-family="Liberation Sans" font-size="13" fill="#bbbbbb">Maven</text><text x="1609.5" y="97" font-family="Liberation Sans" font-weight="bold" font-style="italic" font-size="17" fill="#c4c4c4" textLength="15" lengthAdjust="spacingAndGlyphs">m</text><text transform="translate(1611,190) rotate(90)" font-family="Liberation Sans" font-size="13" fill="#bbbbbb">Database</text><ellipse cx="1617.2" cy="171.5" rx="6.5" ry="2.4" fill="#c4c4c4"/><path d="M1610.7 174.5 Q1617.2 178 1623.7 174.5 V176.5 Q1617.2 180 1610.7 176.5 Z M1610.7 178.7 Q1617.2 182.2 1623.7 178.7 V181 Q1617.2 184.5 1610.7 181 Z" fill="#c4c4c4"/><text transform="translate(1611,294.5) rotate(90)" font-family="Liberation Sans" font-size="13" fill="#bbbbbb">Notifications</text><path d="M1611 286 H1623 L1621 283.5 V279 A4.5 4.5 0 0 0 1613 279 V283.5 Z" fill="#c4c4c4"/><rect x="1615.5" y="286.5" width="3" height="2" fill="#c4c4c4"/><circle cx="1622" cy="276" r="2.6" fill="#e5493a"/><circle cx="43" cy="973" r="2" fill="#b0b0b0"/><circle cx="43" cy="986" r="2" fill="#b0b0b0"/><circle cx="50.5" cy="974.5" r="2" fill="#b0b0b0"/><path d="M43 973 V986 M50.5 974.5 Q50.5 980 43 983" fill="none" stroke="#b0b0b0" stroke-width="2"/><path d="M101.8 974 L112 980.5 L101.8 987 Z" fill="#b9b9b9"/><circle cx="113.7" cy="986" r="3" fill="#27d42a"/><rect x="168" y="973" width="2.5" height="2.5" fill="#b0b0b0"/><rect x="168" y="977.5" width="2.5" height="2.5" fill="#b0b0b0"/><rect x="168" y="982" width="2.5" height="2.5" fill="#b0b0b0"/><rect x="172" y="973" width="8.7" height="2.5" fill="#b0b0b0"/><rect x="172" y="977.5" width="8.7" height="2.5" fill="#b0b0b0"/><rect x="172" y="982" width="8.7" height="2.5" fill="#b0b0b0"/><circle cx="256.6" cy="978.5" r="6.8" fill="#b0b0b0"/><rect x="255.4" y="974" width="2.4" height="6" fill="#3c3f41"/><rect x="255.4" y="981.5" width="2.4" height="2.2" fill="#3c3f41"/><path d="M350 985 C351 976 358 973 366 971 C366 979 361 985 352 986 Z" fill="#b0b0b0"/><path d="M352 984 L363 975" stroke="#3c3f41" stroke-width="1"/><rect x="434" y="972" width="15" height="13" fill="#b0b0b0"/><path d="M436.5 975 L440 978 L436.5 981" fill="none" stroke="#3c3f41" stroke-width="1.5"/><rect x="441" y="981" width="5" height="1.5" fill="#3c3f41"/><path d="M531 986 L538 975 L545 986" fill="none" stroke="#b0b0b0" stroke-width="1.5"/><circle cx="538" cy="973.5" r="2.7" fill="#b0b0b0"/><rect x="529.6" y="982" width="5" height="5" fill="#b0b0b0"/><rect x="541" y="982" width="5" height="5" fill="#b0b0b0"/><path d="M639 972.5 L647 972.5 L651 979.5 L647 986.5 L639 986.5 L635.2 979.5 Z" fill="#b0b0b0"/><path d="M640.5 975.5 L647 979.5 L640.5 983.5 Z" fill="#3c3f41"/><path d="M737 975 A6.5 6.5 0 1 0 733 986" fill="none" stroke="#b0b0b0" stroke-width="1.8"/><path d="M735 975 V980 L733 982" fill="none" stroke="#b0b0b0" stroke-width="1.3"/><path d="M735.5 977 L743.8 981.5 L735.5 986.5 Z" fill="#b0b0b0"/><path d="M823 978.5 L830.5 986" stroke="#b0b0b0" stroke-width="2.8"/><path d="M816 979 L823.5 972.5 L826 975.5 L818.5 982 Z" fill="#b0b0b0"/><path d="M898 972 L905 975.5 L898 979 L891 975.5 Z" fill="#b0b0b0"/><path d="M891 978.5 L898 982 L905 978.5 M891 981.5 L898 985 L905 981.5" fill="none" stroke="#b0b0b0" stroke-width="1.4"/><rect x="11.8" y="999.5" width="11.5" height="11" fill="none" stroke="#b4b6b8" stroke-width="1.3"/><path d="M9 1001 V1013.2 H21.5" fill="none" stroke="#b4b6b8" stroke-width="1.5"/><circle cx="1507.5" cy="999.5" r="1.8" fill="#b0b0b0"/><circle cx="1507.5" cy="1011" r="1.8" fill="#b0b0b0"/><circle cx="1516" cy="1000" r="1.8" fill="#b0b0b0"/><path d="M1507.5 999.5 V1011 M1516 1000 Q1516 1006 1507.5 1008" fill="none" stroke="#b0b0b0" stroke-width="1.8"/><rect x="1575" y="1004" width="9.4" height="7.5" fill="#b0b0b0"/><path d="M1572 1003.5 V1000 A3.3 3.3 0 0 1 1578.6 1000 V1004" fill="none" stroke="#b0b0b0" stroke-width="1.6"/><path d="M1603 1009 A4 4 0 0 1 1602 1001 A5.5 5.5 0 0 1 1612.5 999.5 A4 4 0 0 1 1614 1007 Z" fill="#b0b0b0"/><text x="1605.3" y="1006.5" font-family="Liberation Sans" font-weight="bold" font-size="9" fill="#3c3f41">?</text><polygon points="1618.60,1013.32 1617.59,1015.07 1616.30,1014.66 1615.60,1015.07 1615.31,1016.38 1613.29,1016.38 1613.00,1015.07 1612.30,1014.66 1611.01,1015.07 1610.00,1013.32 1610.99,1012.41 1610.99,1011.59 1610.00,1010.68 1611.01,1008.93 1612.30,1009.34 1613.00,1008.93 1613.29,1007.62 1615.31,1007.62 1615.60,1008.93 1616.30,1009.34 1617.59,1008.93 1618.60,1010.68 1617.61,1011.59 1617.61,1012.41" fill="#b0b0b0" stroke="#b0b0b0" stroke-width="0.6" stroke-linejoin="round"/><circle cx="1614.3" cy="1012" r="1.53" fill="#3c3f41"/><rect x="45" y="81" width="18" height="17" fill="#9ca0a4"/><rect x="46.9" y="85.1" width="14.3" height="10.7" fill="#1e3644"/><rect x="48" y="85.9" width="12" height="9.1" fill="#4697b6"/><path d="M134 87.2 L146 87.2 L140 93 Z" fill="#bdbdbd"/><circle cx="469.9" cy="89.1" r="8.1" fill="none" stroke="#c4c4c4" stroke-width="2"/><path d="M469.9 81 V85.6 M469.9 92.6 V97.2 M461.8 89.1 H466.4 M473.4 89.1 H478" stroke="#c4c4c4" stroke-width="2"/><rect x="494.6" y="80.5" width="15.1" height="2.1" fill="#c4c4c4"/><rect x="494.6" y="95.5" width="15.1" height="2.1" fill="#c4c4c4"/><path d="M498 88 L502.2 84.6 L506.4 88 Z M498 90 L502.2 93.9 L506.4 90 Z" fill="#c4c4c4"/><rect x="527.4" y="88" width="15.1" height="2.1" fill="#c4c4c4"/><path d="M531 81 L539 81 L535 85.8 Z M531 97.1 L539 97.1 L535 92.3 Z" fill="#c4c4c4"/><rect x="555.5" y="75" width="1" height="26" fill="#4a4d4f"/><polygon points="583.45,91.34 581.65,94.46 579.36,93.73 578.11,94.45 577.60,96.79 574.00,96.79 573.49,94.45 572.24,93.73 569.95,94.46 568.15,91.34 569.92,89.72 569.92,88.28 568.15,86.66 569.95,83.54 572.24,84.27 573.49,83.55 574.00,81.21 577.60,81.21 578.11,83.55 579.36,84.27 581.65,83.54 583.45,86.66 581.68,88.28 581.68,89.72" fill="#c4c4c4" stroke="#c4c4c4" stroke-width="0.6" stroke-linejoin="round"/><circle cx="575.8" cy="89" r="2.72" fill="#3c3f41"/><rect x="601.1" y="87.6" width="15.6" height="2.4" fill="#c4c4c4"/></svg>
</body></html>
